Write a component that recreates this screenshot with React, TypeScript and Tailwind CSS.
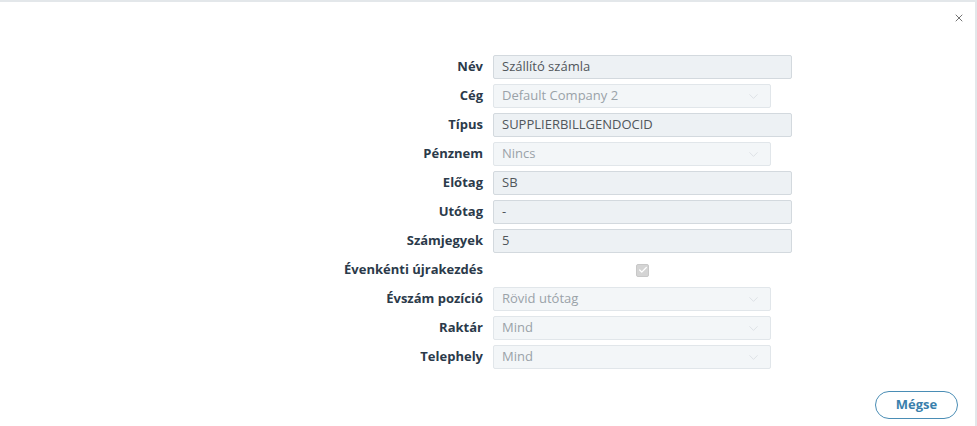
import { ChevronDown, X, Check } from "lucide-react";

type Row = {
  label: string;
  kind: "text" | "select" | "check";
  value?: string;
};

const rows: Row[] = [
  { label: "Név", kind: "text", value: "Szállító számla" },
  { label: "Cég", kind: "select", value: "Default Company 2" },
  { label: "Típus", kind: "text", value: "SUPPLIERBILLGENDOCID" },
  { label: "Pénznem", kind: "select", value: "Nincs" },
  { label: "Előtag", kind: "text", value: "SB" },
  { label: "Utótag", kind: "text", value: "-" },
  { label: "Számjegyek", kind: "text", value: "5" },
  { label: "Évenkénti újrakezdés", kind: "check" },
  { label: "Évszám pozíció", kind: "select", value: "Rövid utótag" },
  { label: "Raktár", kind: "select", value: "Mind" },
  { label: "Telephely", kind: "select", value: "Mind" },
];

function Field({ row }: { row: Row }) {
  if (row.kind === "check") {
    return (
      <div className="w-[299px] h-[24px] flex items-center justify-center">
        <div className="w-[13px] h-[13px] rounded-[2px] bg-[#d4d4d4] border border-[#c8c8c8] flex items-center justify-center">
          <Check size={10} strokeWidth={3} className="text-white" />
        </div>
      </div>
    );
  }
  if (row.kind === "select") {
    return (
      <div className="w-[278px] h-[24px] border border-[#e1e6ea] bg-[#f3f6f8] rounded-[2px] flex items-center justify-between pl-[8px] pr-[9px] text-[13px] text-[#9aa2a8]">
        <span>{row.value}</span>
        <ChevronDown size={15} strokeWidth={1} className="text-[#d0d6da]" />
      </div>
    );
  }
  return (
    <div className="w-[299px] h-[24px] border border-[#d3d9de] bg-[#edf1f4] rounded-[2px] flex items-center pl-[8px] text-[13px] text-[#50565b]">
      {row.value}
    </div>
  );
}

export default function App() {
  return (
    <div
      className="w-[977px] h-[426px] bg-white border-t-2 border-r-2 border-[#e3e7ea] relative"
      style={{ fontFamily: '"Open Sans", sans-serif' }}
    >
      {/* Close */}
      <button className="absolute right-[10px] top-[10px] text-[#444]">
        <X size={12} strokeWidth={1.5} />
      </button>

      {/* Form */}
      <div className="pt-[53px] pl-[333px] flex flex-col gap-[5px]">
        {rows.map((row) => (
          <div key={row.label} className="flex items-center gap-[10px]">
            <div className="w-[150px] text-right text-[13px] font-bold text-[#2b3a4a]">
              {row.label}
            </div>
            <Field row={row} />
          </div>
        ))}
      </div>

      {/* Footer */}
      <div className="flex justify-end pr-[17px] pt-[22px]">
        <button className="w-[83px] h-[28px] rounded-full border border-[#4a8db5] text-[13px] font-bold text-[#3a7fac]">
          Mégse
        </button>
      </div>
    </div>
  );
}
